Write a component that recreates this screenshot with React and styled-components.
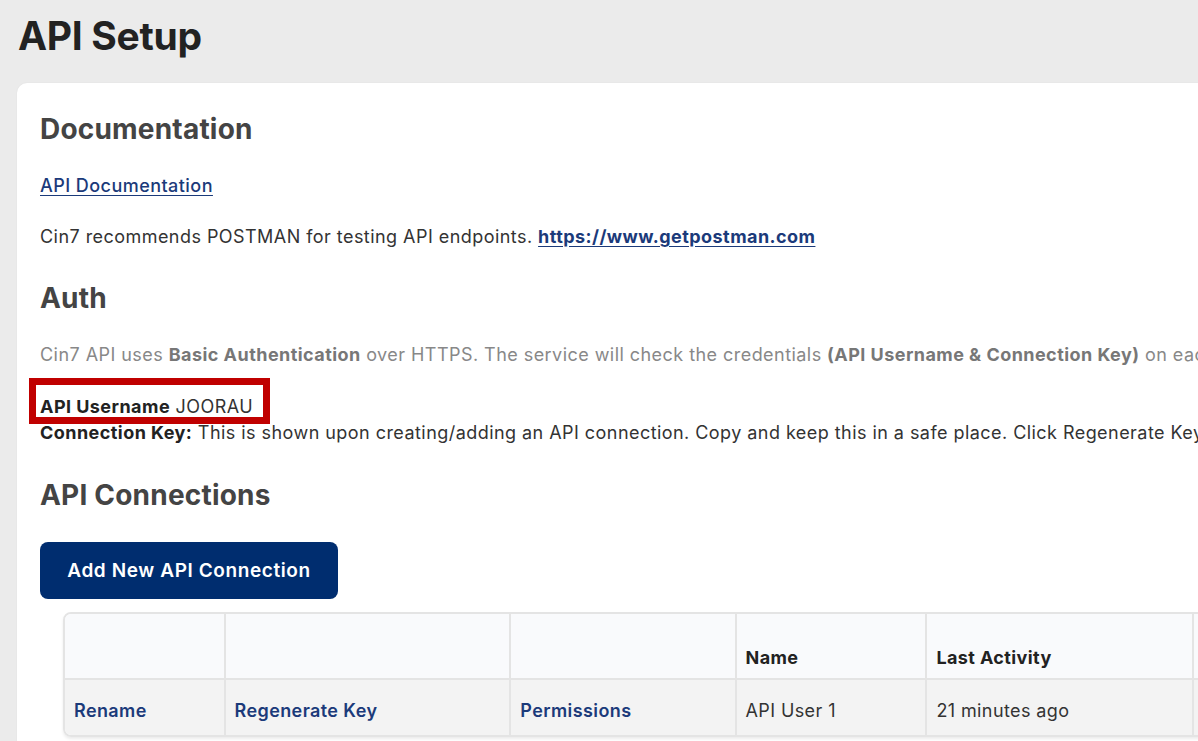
import React from "react";
import styled, { createGlobalStyle } from "styled-components";

// api connections shown in the table
const connections = [
  {
    name: "API User 1",
    lastActivity: "21 minutes ago",
  },
];

const columns = [
  { label: "", width: "158px" },
  { label: "", width: "283px" },
  { label: "", width: "223px" },
  { label: "Name", width: "189px" },
  { label: "Last Activity", width: "264px" },
  { label: "", width: "200px" },
];

function App() {
  return (
    <Page>
      <GlobalStyle />
      <PageTitle>API Setup</PageTitle>
      <Card>
        <SectionTitle>Documentation</SectionTitle>
        <Paragraph $gap="26px">
          <Link href="#">API Documentation</Link>
        </Paragraph>
        <Paragraph $gap="25px">
          Cin7 recommends POSTMAN for testing API endpoints.{" "}
          <Link href="#" $bold>
            https://www.getpostman.com
          </Link>
        </Paragraph>

        <SectionTitle $gap="30px">Auth</SectionTitle>
        <Paragraph $gap="26px" $muted>
          Cin7 API uses <b>Basic Authentication</b> over HTTPS. The service will
          check the credentials <b>(API Username &amp; Connection Key)</b> on
          each request.
        </Paragraph>
        <Paragraph $gap="26px">
          <Highlighted>
            <b>API Username</b> JOORAU
          </Highlighted>
        </Paragraph>
        <Paragraph>
          <b>Connection Key:</b> This is shown upon creating/adding an API
          connection. Copy and keep this in a safe place. Click Regenerate Key
          to create a new one.
        </Paragraph>

        <SectionTitle $gap="31px">API Connections</SectionTitle>
        <PrimaryButton>Add New API Connection</PrimaryButton>

        <TableWrap>
          <Table>
            <colgroup>
              {columns.map((col, index) => (
                <col key={index} style={{ width: col.width }} />
              ))}
            </colgroup>
            <thead>
              <tr>
                {columns.map((col, index) => (
                  <Th key={index}>{col.label}</Th>
                ))}
              </tr>
            </thead>
            <tbody>
              {connections.map((conn, index) => (
                <tr key={index}>
                  <Td>
                    <ActionLink>Rename</ActionLink>
                  </Td>
                  <Td>
                    <ActionLink>Regenerate Key</ActionLink>
                  </Td>
                  <Td>
                    <ActionLink>Permissions</ActionLink>
                  </Td>
                  <Td>{conn.name}</Td>
                  <Td>{conn.lastActivity}</Td>
                  <Td></Td>
                </tr>
              ))}
            </tbody>
          </Table>
        </TableWrap>
      </Card>
    </Page>
  );
}

const GlobalStyle = createGlobalStyle`
  html, body {
    margin: 0;
    padding: 0;
    background: #ebebeb;
    overflow: hidden;
  }
  body {
    font-family: Inter, "Noto Sans", sans-serif;
    -webkit-font-smoothing: antialiased;
  }
`;

const Page = styled.div`
  width: 1400px;
  padding: 12px 0 0 17px;
  box-sizing: border-box;
`;

const PageTitle = styled.h1`
  margin: 0 0 0 1px;
  font-size: 39px;
  line-height: 48px;
  font-weight: 700;
  color: #222;
  letter-spacing: -0.3px;
`;

const Card = styled.div`
  margin-top: 23px;
  background: #fff;
  border-radius: 10px;
  padding: 28px 0 40px 23px;
  box-shadow: 0 0 2px rgba(0, 0, 0, 0.06);
`;

const SectionTitle = styled.h2`
  margin: ${(props) => props.$gap || "0"} 0 0;
  font-size: 28px;
  line-height: 36px;
  font-weight: 700;
  color: #444;
  letter-spacing: 0.2px;
`;

const Paragraph = styled.p`
  margin: ${(props) => props.$gap || "0"} 0 0;
  font-size: 18px;
  line-height: 26px;
  color: ${(props) => (props.$muted ? "#888" : "#333")};
  white-space: nowrap;
  letter-spacing: 0.45px;
  b {
    font-weight: 700;
    color: ${(props) => (props.$muted ? "#777" : "#222")};
  }
`;

const Link = styled.a`
  color: #1b3a7a;
  font-weight: ${(props) => (props.$bold ? 700 : 500)};
  text-decoration: underline;
  text-underline-offset: 3px;
`;

// red annotation frame around the username
const Highlighted = styled.span`
  position: relative;
  display: inline-block;
  &::after {
    content: "";
    position: absolute;
    left: -11px;
    top: -16px;
    right: -17px;
    bottom: -4px;
    border: 7px solid #c00000;
  }
`;

const PrimaryButton = styled.button`
  display: block;
  margin-top: 29px;
  width: 298px;
  height: 57px;
  border: none;
  border-radius: 8px;
  background: #002d6f;
  color: #fff;
  font-family: inherit;
  font-size: 19px;
  font-weight: 600;
  letter-spacing: 0.6px;
  cursor: pointer;
`;

const TableWrap = styled.div`
  margin: 13px 0 0 23px;
  width: 1330px;
  border: 2px solid #e4e4e4;
  border-radius: 8px;
  overflow: hidden;
  box-shadow: 0 2px 3px rgba(0, 0, 0, 0.08);
`;

const Table = styled.table`
  width: 100%;
  border-collapse: collapse;
  table-layout: fixed;
  font-size: 18px;
  letter-spacing: 0.4px;
`;

const Th = styled.th`
  height: 65px;
  padding: 0 9px 10px;
  box-sizing: border-box;
  background: #f9fafc;
  text-align: left;
  vertical-align: bottom;
  font-weight: 700;
  color: #222;
  border-left: 2px solid #e4e4e4;
  border-bottom: 2px solid #e4e4e4;
  &:first-child {
    border-left: none;
  }
`;

const Td = styled.td`
  height: 56px;
  padding: 5px 9px 0;
  box-sizing: border-box;
  background: #f3f3f3;
  color: #333;
  border-left: 2px solid #e4e4e4;
  &:first-child {
    border-left: none;
  }
`;

const ActionLink = styled.span`
  color: #1b3a7a;
  font-weight: 600;
  cursor: pointer;
`;

export default App;
